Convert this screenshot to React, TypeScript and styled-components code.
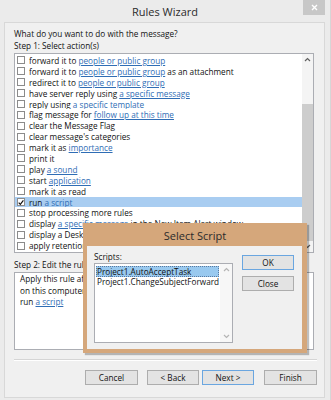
import React from 'react';
import styled, { createGlobalStyle } from 'styled-components';

const Global = createGlobalStyle`
  html, body { margin: 0; padding: 0; background: #ebebeb; }
  body { font-family: "Open Sans", "Noto Sans", sans-serif; color: #111; }
  * { box-sizing: border-box; }
`;

const Window = styled.div`
  position: relative;
  width: 331px;
  height: 400px;
  background: #ebebeb;
  border-right: 1px solid #d6d6d6;
  display: flex;
  flex-direction: column;
  overflow: hidden;
`;

const TitleBar = styled.div`
  height: 22px;
  display: grid;
  grid-template-columns: 1fr auto 1fr;
  align-items: start;
`;

const Title = styled.div`
  grid-column: 2;
  font-size: 11px;
  line-height: 23px;
  color: #2b2b2b;
`;

const CloseBtn = styled.div`
  grid-column: 3;
  justify-self: end;
  width: 22px;
  height: 15px;
  margin-right: 5px;
  background: #c7c7c7;
  display: flex;
  align-items: center;
  justify-content: center;
`;

const Panel = styled.div`
  flex: 1;
  margin: 0 5px 2px 4px;
  border: 1px solid #d8d8d8;
  background: #f0f0f0;
  padding: 5px 0 0 9px;
  display: flex;
  flex-direction: column;
`;

const Label = styled.div`
  font-size: 8.2px;
  line-height: 12px;
  white-space: nowrap;
`;

const StepLabel = styled(Label)<{ $mt?: number }>`
  margin-top: ${(p) => p.$mt ?? 0}px;
`;

const ListBox = styled.div`
  width: 300px;
  height: 200px;
  margin-top: 1px;
  border: 1px solid #abadb3;
  background: #fff;
  display: flex;
`;

const Rows = styled.div`
  flex: 1;
  padding-top: 1px;
  min-width: 0;
`;

const Row = styled.div<{ $selected?: boolean }>`
  height: 10.9px;
  display: flex;
  align-items: center;
  padding-left: 2px;
  font-size: 8.2px;
  white-space: nowrap;
  overflow: hidden;
  background: ${(p) => (p.$selected ? '#a9cdf1' : 'transparent')};
`;

const Check = styled.span`
  flex: none;
  width: 8px;
  height: 8px;
  margin-right: 4px;
  border: 1px solid #8b8b8b;
  background: #fff;
  display: flex;
  align-items: center;
  justify-content: center;
`;

const Link = styled.span`
  color: #2f6db5;
  text-decoration: underline;
  text-underline-offset: 1px;
`;

const Spacer = styled.span`
  white-space: pre;
`;

const ScrollBar = styled.div<{ $w: number; $bg?: string }>`
  flex: none;
  width: ${(p) => p.$w}px;
  background: ${(p) => p.$bg ?? '#f4f4f4'};
  display: flex;
  flex-direction: column;
  align-items: center;
`;

const Arrow = styled.div`
  height: 11px;
  width: 100%;
  display: flex;
  align-items: center;
  justify-content: center;
`;

const Thumb = styled.div<{ $mt: number }>`
  margin-top: ${(p) => p.$mt}px;
  width: 100%;
  flex: 1;
  background: #cdcdcd;
`;

const TrackFill = styled.div`
  flex: 1;
`;

const EditBox = styled.div`
  width: 300px;
  height: 78px;
  margin-top: 1px;
  border: 1px solid #abadb3;
  background: #fff;
  padding: 0 0 0 5px;
`;

const EditLine = styled.div`
  font-size: 8.2px;
  line-height: 11.5px;
  white-space: nowrap;
`;

const Separator = styled.div`
  width: 303px;
  margin-top: 9px;
  border-top: 1px solid #d5d5d5;
  border-bottom: 1px solid #ffffff;
`;

const ButtonRow = styled.div`
  width: 303px;
  margin-top: 9px;
  display: flex;
  justify-content: flex-end;
`;

const Button = styled.div<{ $ml?: number; $default?: boolean; $w?: number }>`
  width: ${(p) => p.$w ?? 53}px;
  height: 15px;
  margin-left: ${(p) => p.$ml ?? 0}px;
  border: 1px solid ${(p) => (p.$default ? '#6aa6e0' : '#adadad')};
  background: #e3e3e3;
  font-size: 8.2px;
  display: flex;
  align-items: center;
  justify-content: center;
  color: #111;
`;

/* ---------- Select Script popup ---------- */

const Popup = styled.div`
  position: absolute;
  left: 83px;
  top: 223px;
  width: 224px;
  height: 130px;
  background: #d5a77b;
  box-shadow: 2px 2px 1px rgba(0, 0, 0, 0.25);
  display: flex;
  flex-direction: column;
`;

const PopupTitle = styled.div`
  height: 23px;
  font-size: 11px;
  line-height: 25px;
  text-align: center;
  color: #2b2b2b;
`;

const PopupBody = styled.div`
  flex: 1;
  margin: 0 5px 4px 4px;
  background: #f0f0f0;
  padding: 5px 0 0 7px;
  display: flex;
  align-items: flex-start;
`;

const ScriptsCol = styled.div`
  display: flex;
  flex-direction: column;
`;

const ScriptsList = styled.div`
  width: 139px;
  height: 80px;
  border: 1px solid #abadb3;
  background: #fff;
  display: flex;
`;

const ScriptItems = styled.div`
  flex: 1;
  padding: 2px 1px 0 1px;
`;

const ScriptItem = styled.div<{ $selected?: boolean }>`
  height: 10.5px;
  display: flex;
  align-items: center;
  padding-left: 1px;
  font-size: 8.2px;
  white-space: nowrap;
  background: ${(p) => (p.$selected ? '#99c9ef' : 'transparent')};
  outline: ${(p) => (p.$selected ? '1px dotted #5a7aa0' : 'none')};
  outline-offset: -1px;
`;

const ButtonCol = styled.div`
  margin-top: 4px;
  margin-left: 9px;
  display: flex;
  flex-direction: column;
  gap: 6px;
`;

const Chevron = ({ up, color }: { up?: boolean; color: string }) => (
  <svg width="7" height="5" viewBox="0 0 7 5">
    <polyline
      points={up ? '1,4 3.5,1.5 6,4' : '1,1 3.5,3.5 6,1'}
      fill="none"
      stroke={color}
      strokeWidth="1.2"
    />
  </svg>
);

const Tick = () => (
  <svg width="7" height="7" viewBox="0 0 7 7">
    <path d="M0.8 3.6 L2.7 5.6 L6.3 0.9" fill="none" stroke="#111" strokeWidth="1.4" />
  </svg>
);

type Part = string | { link: string };
type Action = { parts: Part[]; checked?: boolean };

const actions: Action[] = [
  { parts: ['forward it to ', { link: 'people or public group' }] },
  { parts: ['forward it to ', { link: 'people or public group' }, ' as an attachment'] },
  { parts: ['redirect it to ', { link: 'people or public group' }] },
  { parts: ['have server reply using ', { link: 'a specific message' }] },
  { parts: ['reply using ', { link: 'a specific template' }] },
  { parts: ['flag message for ', { link: 'follow up at this time' }] },
  { parts: ['clear the Message Flag'] },
  { parts: ["clear message's categories"] },
  { parts: ['mark it as ', { link: 'importance' }] },
  { parts: ['print it'] },
  { parts: ['play ', { link: 'a sound' }] },
  { parts: ['start ', { link: 'application' }] },
  { parts: ['mark it as read'] },
  { parts: ['run ', { link: 'a script' }], checked: true },
  { parts: ['stop processing more rules'] },
  { parts: ['display ', { link: 'a specific message' }, ' in the New Item Alert window'] },
  { parts: ['display a Desktop Alert'] },
  { parts: ['apply retention policy'] },
];

const renderParts = (parts: Part[]) =>
  parts.map((p, i) =>
    typeof p === 'string' ? <Spacer key={i}>{p}</Spacer> : <Link key={i}>{p.link}</Link>
  );

export default function App() {
  return (
    <Window>
      <Global />
      <TitleBar>
        <Title>Rules Wizard</Title>
        <CloseBtn>
          <svg width="7" height="7" viewBox="0 0 7 7">
            <path d="M1 1 L6 6 M6 1 L1 6" stroke="#fff" strokeWidth="1.4" />
          </svg>
        </CloseBtn>
      </TitleBar>
      <Panel>
        <Label>What do you want to do with the message?</Label>
        <Label>Step 1: Select action(s)</Label>
        <ListBox>
          <Rows>
            {actions.map((a, i) => (
              <Row key={i} $selected={a.checked}>
                <Check>{a.checked ? <Tick /> : null}</Check>
                {renderParts(a.parts)}
              </Row>
            ))}
          </Rows>
          <ScrollBar $w={11}>
            <Arrow>
              <Chevron up color="#606060" />
            </Arrow>
            <Thumb $mt={39} />
            <Arrow>
              <Chevron color="#606060" />
            </Arrow>
          </ScrollBar>
        </ListBox>
        <StepLabel $mt={6}>Step 2: Edit the rule description (click an underlined value)</StepLabel>
        <EditBox>
          <EditLine>Apply this rule after the message arrives</EditLine>
          <EditLine>on this computer only</EditLine>
          <EditLine>
            run <Link>a script</Link>
          </EditLine>
        </EditBox>
        <Separator />
        <ButtonRow>
          <Button>Cancel</Button>
          <Button $ml={9} $w={52}>&lt; Back</Button>
          <Button $ml={3} $w={52} $default>
            Next &gt;
          </Button>
          <Button $ml={10}>Finish</Button>
        </ButtonRow>
      </Panel>

      <Popup>
        <PopupTitle>Select Script</PopupTitle>
        <PopupBody>
          <ScriptsCol>
            <Label>Scripts:</Label>
            <ScriptsList>
              <ScriptItems>
                <ScriptItem $selected>Project1.AutoAcceptTask</ScriptItem>
                <ScriptItem>Project1.ChangeSubjectForward</ScriptItem>
              </ScriptItems>
              <ScrollBar $w={12} $bg="#f7f7f7">
                <Arrow>
                  <Chevron up color="#b5b5b5" />
                </Arrow>
                <TrackFill />
                <Arrow>
                  <Chevron color="#b5b5b5" />
                </Arrow>
              </ScrollBar>
            </ScriptsList>
          </ScriptsCol>
          <ButtonCol>
            <Button $w={52} $default>
              OK
            </Button>
            <Button $w={52}>Close</Button>
          </ButtonCol>
        </PopupBody>
      </Popup>
    </Window>
  );
}
